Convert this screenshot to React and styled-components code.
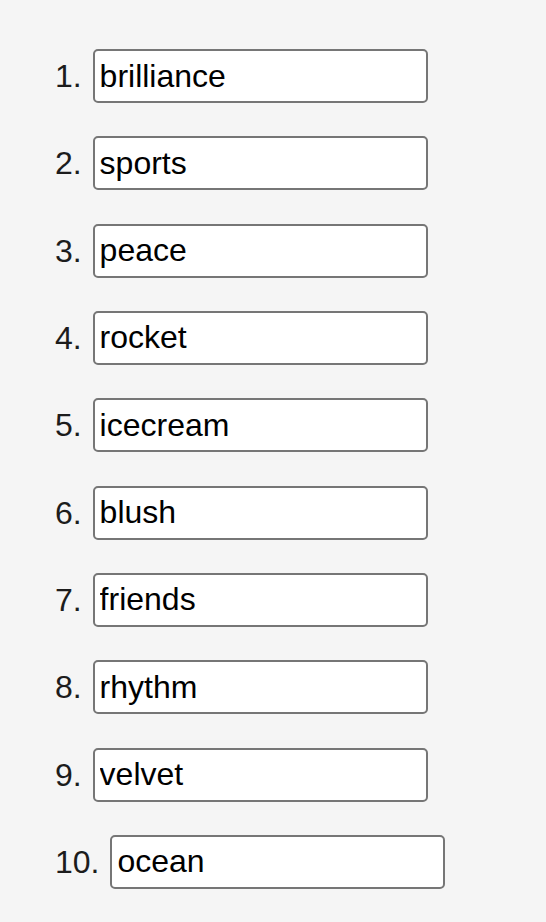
import styled, { createGlobalStyle } from 'styled-components';

const GlobalStyle = createGlobalStyle`
  html, body {
    margin: 0;
    padding: 0;
    background: #f5f5f5;
  }
  body {
    font-family: 'Liberation Sans', Arial, Helvetica, sans-serif;
  }
`;

const Page = styled.main`
  padding: 0 0 40px 55px;
  overflow: hidden;
`;

// heading sits mostly above the fold, only its descender tips show
const Heading = styled.h2`
  margin: -36px 0 0 0;
  height: 37px;
  font-size: 32px;
  font-weight: bold;
  line-height: normal;
  color: #555;
`;

const WordList = styled.ol`
  list-style-position: inside;
  list-style-type: decimal;
  margin: 48px 0 0 0;
  padding: 0;
`;

const WordItem = styled.li`
  font-size: 32px;
  color: #1c1c1c;
  margin-bottom: 33.33px;
`;

const WordInput = styled.input`
  box-sizing: border-box;
  width: 335px;
  height: 54px;
  margin: 0 0 0 2px;
  padding: 0 5px;
  border: 2px solid #767676;
  border-radius: 5px;
  background: #fff;
  font-family: 'Liberation Sans', Arial, Helvetica, sans-serif;
  font-size: 32px;
  line-height: normal;
  color: #000;
  outline: none;
`;

const words = [
  'brilliance',
  'sports',
  'peace',
  'rocket',
  'icecream',
  'blush',
  'friends',
  'rhythm',
  'velvet',
  'ocean',
];

export default function App() {
  return (
    <Page>
      <GlobalStyle />
      <Heading>Type your spelling words</Heading>
      <WordList>
        {words.map((w) => (
          <WordItem key={w}>
            <WordInput type="text" defaultValue={w} />
          </WordItem>
        ))}
      </WordList>
    </Page>
  );
}
